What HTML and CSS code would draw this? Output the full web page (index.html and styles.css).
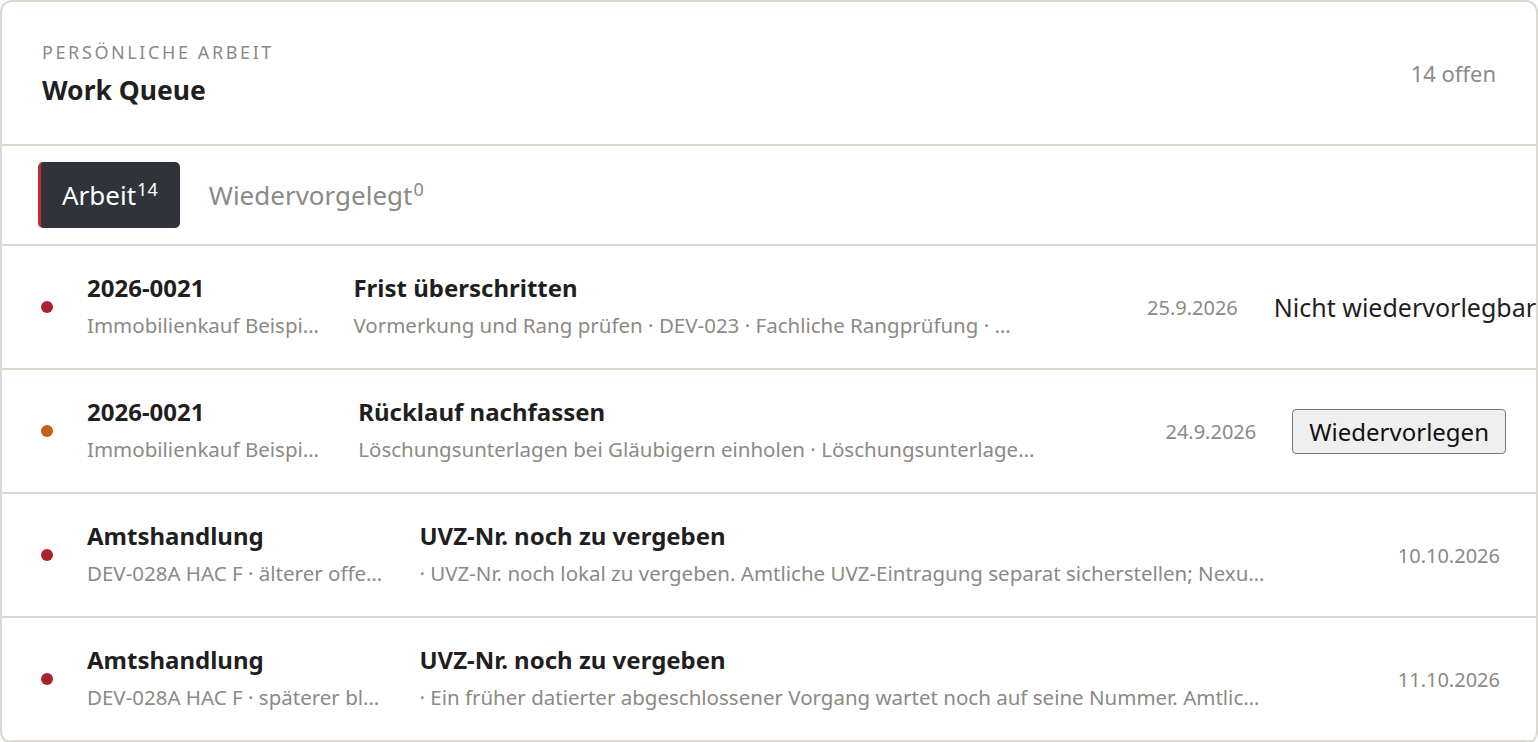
FILE: index.html
```html
<!DOCTYPE html>
<html lang="de">

<head>
    <meta charset="UTF-8">
    <meta name="viewport" content="width=device-width, initial-scale=1.0">
    <title>Work Queue</title>
    <link rel="stylesheet" href="styles.css">
</head>

<body>
    <div class="card">
        <div class="cardHead">
            <div>
                <div class="eyebrow">Persönliche Arbeit</div>
                <h1 class="title">Work Queue</h1>
            </div>
            <div class="count">14 offen</div>
        </div>

        <div class="tabs">
            <button class="tab active">Arbeit<sup>14</sup></button>
            <button class="tab">Wiedervorgelegt<sup>0</sup></button>
        </div>

        <div class="list">
            <div class="row">
                <span class="dot red"></span>
                <div class="main">
                    <div class="col">
                        <div class="strong">2026-0021</div>
                        <div class="sub">Immobilienkauf Beispiel Müller / Schmidt</div>
                    </div>
                    <div class="col">
                        <div class="strong">Frist überschritten</div>
                        <div class="sub">Vormerkung und Rang prüfen · DEV-023 · Fachliche Rangprüfung · Grundbuchauszug</div>
                    </div>
                </div>
                <div class="date">25.9.2026</div>
                <div class="note">Nicht wiedervorlegbar</div>
            </div>

            <div class="row">
                <span class="dot orange"></span>
                <div class="main">
                    <div class="col">
                        <div class="strong">2026-0021</div>
                        <div class="sub">Immobilienkauf Beispiel Müller / Schmidt</div>
                    </div>
                    <div class="col">
                        <div class="strong">Rücklauf nachfassen</div>
                        <div class="sub">Löschungsunterlagen bei Gläubigern einholen · Löschungsunterlagen anfordern</div>
                    </div>
                </div>
                <div class="date">24.9.2026</div>
                <button class="resubmit">Wiedervorlegen</button>
            </div>

            <div class="row">
                <span class="dot red"></span>
                <div class="main">
                    <div class="col">
                        <div class="strong">Amtshandlung</div>
                        <div class="sub">DEV-028A HAC F · älterer offener Vorgang</div>
                    </div>
                    <div class="col">
                        <div class="strong">UVZ-Nr. noch zu vergeben</div>
                        <div class="sub">· UVZ-Nr. noch lokal zu vergeben. Amtliche UVZ-Eintragung separat sicherstellen; Nexus-Abgleich offen.</div>
                    </div>
                </div>
                <div class="date">10.10.2026</div>
            </div>

            <div class="row">
                <span class="dot red"></span>
                <div class="main">
                    <div class="col">
                        <div class="strong">Amtshandlung</div>
                        <div class="sub">DEV-028A HAC F · späterer blockierter Vorgang</div>
                    </div>
                    <div class="col">
                        <div class="strong">UVZ-Nr. noch zu vergeben</div>
                        <div class="sub">· Ein früher datierter abgeschlossener Vorgang wartet noch auf seine Nummer. Amtliche Vergabe prüfen.</div>
                    </div>
                </div>
                <div class="date">11.10.2026</div>
            </div>
        </div>
    </div>
</body>

</html>
```

FILE: styles.css
```css
* {
    margin: 0;
    padding: 0;
    box-sizing: border-box;
}

html,
body {
    background-color: #fff;
    font-family: "Noto Sans", "Open Sans", sans-serif;
    color: #222;
}

.card {
    border: 2px solid #dcd9d2;
    border-radius: 12px;
    overflow: hidden;
    background: #fff;
}

.cardHead {
    display: flex;
    justify-content: space-between;
    align-items: center;
    padding: 38px 40px 38px 40px;
    border-bottom: 2px solid #dcd9d2;
}

.eyebrow {
    font-size: 18px;
    line-height: 24px;
    letter-spacing: 2.6px;
    text-transform: uppercase;
    color: #8b8a85;
}

.title {
    margin-top: 10px;
    font-size: 26.5px;
    line-height: 32px;
    font-weight: 700;
    color: #1f1f1f;
}

.count {
    font-size: 22px;
    color: #8b8a85;
}

.tabs {
    display: flex;
    gap: 8px;
    padding: 16px 36px;
    border-bottom: 2px solid #dcd9d2;
}

.tab {
    height: 66px;
    padding: 0 22px 0 21px;
    border: 0;
    border-radius: 5px;
    background: transparent;
    font-family: inherit;
    font-size: 26px;
    color: #8b8a85;
    cursor: pointer;
}

.tab sup {
    font-size: 18px;
    vertical-align: 9px;
    line-height: 0;
    margin-left: 1px;
}

.tab.active {
    background: #30333a;
    color: #fff;
    border-left: 3px solid #c42a31;
}

.row {
    display: flex;
    align-items: center;
    gap: 36px;
    height: 124px;
    padding: 0 36px 0 37px;
    border-bottom: 2px solid #dcd9d2;
}

.dot {
    flex: none;
    width: 12px;
    height: 12px;
    border-radius: 50%;
    margin-left: 2px;
    margin-right: -2px;
}

.dot.red {
    background: #a9232e;
}

.dot.orange {
    background: #c65f1b;
}

.main {
    flex: 1 1 auto;
    min-width: 1024px;
    display: grid;
    grid-template-columns: minmax(0, 1fr) minmax(0, 2.8fr);
    column-gap: 28px;
    padding-right: 90px;
}

.col {
    min-width: 0;
}

.strong {
    font-size: 24px;
    line-height: 32px;
    font-weight: 700;
    color: #1f1f1f;
    white-space: nowrap;
    overflow: hidden;
    text-overflow: ellipsis;
}

.sub {
    margin-top: 4px;
    font-size: 20.5px;
    line-height: 34px;
    color: #8b8a85;
    white-space: nowrap;
    overflow: hidden;
    text-overflow: ellipsis;
}

.date {
    flex: none;
    font-size: 20px;
    color: #8b8a85;
    white-space: nowrap;
}

.note {
    flex: none;
    font-size: 25px;
    white-space: nowrap;
    color: #1f1f1f;
}

.resubmit {
    flex: none;
    height: 45px;
    margin-right: -6px;
    padding: 0 16px;
    border: 1px solid #767676;
    border-radius: 4px;
    background: #efefef;
    font-family: inherit;
    font-size: 24px;
    color: #111;
    cursor: pointer;
}
```
